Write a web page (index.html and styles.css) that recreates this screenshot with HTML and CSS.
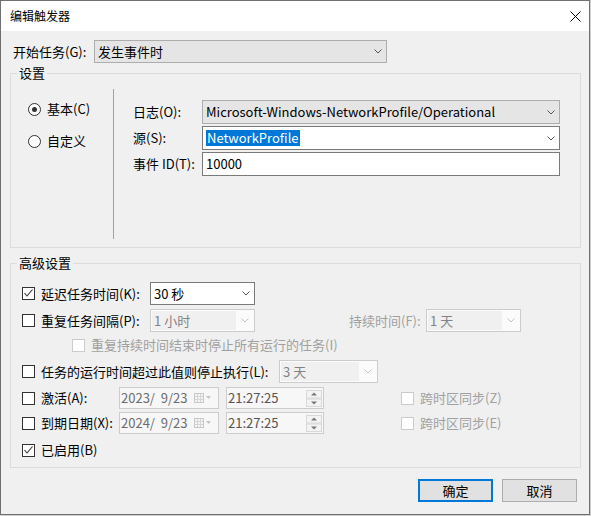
FILE: index.html
```html
<!DOCTYPE html>
<html lang="zh-CN">
<head>
<meta charset="utf-8">
<title>编辑触发器</title>
<link rel="stylesheet" href="styles.css">
</head>
<body>
<div class="window">
  <div class="titlebar">
    <span class="title">编辑触发器</span>
    <svg class="close" width="11" height="11" viewBox="0 0 11 11"><path d="M0.5 0.5 L10.5 10.5 M10.5 0.5 L0.5 10.5" stroke="#000" stroke-width="1" fill="none"/></svg>
  </div>
  <div class="content">
    <div class="start-row">
      <span class="start-label">开始任务(G):</span>
      <div class="combo gray start-combo"><span class="ctext">发生事件时</span><svg class="chev" width="8" height="5" viewBox="0 0 8 5"><path d="M0.5 0.5 L4 4 L7.5 0.5" stroke="#555" fill="none"/></svg></div>
    </div>

    <fieldset class="group g1">
      <legend>设置</legend>
      <div class="g1-inner">
        <div class="radios">
          <div class="radio-row"><span class="radio on"><span class="dot"></span></span><span>基本(C)</span></div>
          <div class="radio-row second"><span class="radio"></span><span>自定义</span></div>
        </div>
        <div class="vsep"></div>
        <div class="fields">
          <span class="flabel">日志(O):</span>
          <div class="combo gray"><span class="ctext">Microsoft-Windows-NetworkProfile/Operational</span><svg class="chev" width="8" height="5" viewBox="0 0 8 5"><path d="M0.5 0.5 L4 4 L7.5 0.5" stroke="#555" fill="none"/></svg></div>
          <span class="flabel">源(S):</span>
          <div class="combo edit"><span class="ctext"><span class="sel">NetworkProfile</span></span><svg class="chev" width="8" height="5" viewBox="0 0 8 5"><path d="M0.5 0.5 L4 4 L7.5 0.5" stroke="#555" fill="none"/></svg></div>
          <span class="flabel">事件 ID(T):</span>
          <div class="combo edit"><span class="ctext">10000</span></div>
        </div>
      </div>
    </fieldset>

    <fieldset class="group g2">
      <legend>高级设置</legend>
      <div class="g2-inner">
        <div class="arow row-a">
          <span class="cb"><svg width="11" height="11" viewBox="0 0 11 11"><path d="M1.5 5 L4 8 L9.5 1.5" stroke="#333" stroke-width="1.1" fill="none"/></svg></span>
          <span class="alabel w-a">延迟任务时间(K):</span>
          <div class="combo list w-sel"><span class="ctext">30 秒</span><svg class="chev" width="8" height="5" viewBox="0 0 8 5"><path d="M0.5 0.5 L4 4 L7.5 0.5" stroke="#555" fill="none"/></svg></div>
        </div>
        <div class="arow row-b">
          <span class="cb"></span>
          <span class="alabel w-a">重复任务间隔(P):</span>
          <div class="combo dis w-sel"><span class="ctext">1 小时</span><svg class="chev" width="8" height="5" viewBox="0 0 8 5"><path d="M0.5 0.5 L4 4 L7.5 0.5" stroke="#c4c4c4" fill="none"/></svg></div>
          <span class="alabel grey w-dur">持续时间(F):</span>
          <div class="combo dis w-day"><span class="ctext">1 天</span><svg class="chev" width="8" height="5" viewBox="0 0 8 5"><path d="M0.5 0.5 L4 4 L7.5 0.5" stroke="#c4c4c4" fill="none"/></svg></div>
        </div>
        <div class="arow row-c">
          <span class="cb dis"></span>
          <span class="alabel grey">重复持续时间结束时停止所有运行的任务(I)</span>
        </div>
        <div class="arow row-d">
          <span class="cb"></span>
          <span class="alabel w-d">任务的运行时间超过此值则停止执行(L):</span>
          <div class="combo dis w-3d"><span class="ctext">3 天</span><svg class="chev" width="8" height="5" viewBox="0 0 8 5"><path d="M0.5 0.5 L4 4 L7.5 0.5" stroke="#c4c4c4" fill="none"/></svg></div>
        </div>
        <div class="arow row-e">
          <span class="cb"></span>
          <span class="alabel w-e">激活(A):</span>
          <div class="datebox"><span class="dtext">2023/  9/23</span><svg class="cal" width="18" height="10" viewBox="0 0 18 10"><rect x="0.5" y="0.5" width="9" height="9" fill="#f4f4f4" stroke="#c8c8c8"/><path d="M1 3.5 H9 M1 6.5 H9 M3.5 1 V9 M6.5 1 V9" stroke="#d6d6d6"/><path d="M12 3 H17 L14.5 6 Z" fill="#c4c4c4"/></svg></div>
          <div class="timebox"><span class="ttext">21:27:25</span><svg class="spin" width="16" height="17" viewBox="0 0 16 17"><rect x="0.5" y="0.5" width="15" height="7.5" fill="#f3f3f3" stroke="#d8d8d8"/><rect x="0.5" y="9" width="15" height="7.5" fill="#f3f3f3" stroke="#d8d8d8"/><path d="M5 5.5 H11 L8 2.5 Z" fill="#777"/><path d="M5 11.5 H11 L8 14.5 Z" fill="#777"/></svg></div>
          <span class="cb dis tz"></span>
          <span class="alabel grey">跨时区同步(Z)</span>
        </div>
        <div class="arow row-f">
          <span class="cb"></span>
          <span class="alabel w-e">到期日期(X):</span>
          <div class="datebox"><span class="dtext">2024/  9/23</span><svg class="cal" width="18" height="10" viewBox="0 0 18 10"><rect x="0.5" y="0.5" width="9" height="9" fill="#f4f4f4" stroke="#c8c8c8"/><path d="M1 3.5 H9 M1 6.5 H9 M3.5 1 V9 M6.5 1 V9" stroke="#d6d6d6"/><path d="M12 3 H17 L14.5 6 Z" fill="#c4c4c4"/></svg></div>
          <div class="timebox"><span class="ttext">21:27:25</span><svg class="spin" width="16" height="17" viewBox="0 0 16 17"><rect x="0.5" y="0.5" width="15" height="7.5" fill="#f3f3f3" stroke="#d8d8d8"/><rect x="0.5" y="9" width="15" height="7.5" fill="#f3f3f3" stroke="#d8d8d8"/><path d="M5 5.5 H11 L8 2.5 Z" fill="#777"/><path d="M5 11.5 H11 L8 14.5 Z" fill="#777"/></svg></div>
          <span class="cb dis tz"></span>
          <span class="alabel grey">跨时区同步(E)</span>
        </div>
        <div class="arow row-g">
          <span class="cb"><svg width="11" height="11" viewBox="0 0 11 11"><path d="M1.5 5 L4 8 L9.5 1.5" stroke="#333" stroke-width="1.1" fill="none"/></svg></span>
          <span class="alabel">已启用(B)</span>
        </div>
      </div>
    </fieldset>

    <div class="buttons">
      <button class="btn default">确定</button>
      <button class="btn">取消</button>
    </div>
  </div>
</div>
</body>
</html>
```
FILE: styles.css
```css
* { box-sizing: border-box; }
html, body { margin: 0; padding: 0; }
body {
  width: 591px;
  height: 516px;
  overflow: hidden;
  background: #cfcfcf;
  font-family: "Noto Sans CJK SC", "Noto Sans", sans-serif;
  font-size: 13px;
  line-height: 16px;
  color: #000;
}
.window {
  width: 590px;
  height: 515px;
  border: 1px solid #707070;
  background: #f0f0f0;
  display: flex;
  flex-direction: column;
}
.titlebar {
  height: 30px;
  flex: none;
  background: #fff;
  display: flex;
  align-items: center;
  justify-content: space-between;
  padding: 0 8px 0 9px;
}
.title { font-size: 12px; }
.close { display: block; }
.content {
  flex: 1;
  padding: 9px 8px 0 9px;
  display: flex;
  flex-direction: column;
}
.start-row {
  height: 23px;
  display: flex;
  align-items: center;
  padding-left: 3px;
}
.start-label { width: 81px; white-space: nowrap; }
.start-combo { width: 293px; }

.combo {
  height: 100%;
  display: flex;
  align-items: center;
  border: 1px solid #adadad;
  padding-left: 3px;
  white-space: nowrap;
}
.combo .ctext { flex: 1; min-width: 0; }
.combo .chev { flex: none; margin-right: 4px; margin-left: 4px; }
.combo.gray { background: #e5e5e5; }
.combo.edit { background: #fff; border-color: #7a7a7a; }
.combo.list { background: #fff; border-color: #7a7a7a; }
.combo.dis {
  background: #fbfbfb;
  border-color: #cccccc;
  color: #838383;
  padding: 1px 0 1px 1px;
}
.combo.dis .ctext {
  align-self: stretch;
  background: #f0f0f0;
  padding-left: 2px;
  display: flex;
  align-items: center;
}
.combo.dis .chev { margin-left: 5px; margin-right: 5px; }
.sel {
  background: #0078d7;
  color: #fff;
  padding: 0 1px 0 1px;
  display: inline-block;
  line-height: 16px;
}

fieldset.group {
  margin: 2px 0 0 0;
  padding: 0;
  border: 1px solid #dcdcdc;
  min-width: 0;
}
fieldset.group legend {
  margin-left: 6px;
  padding: 0 2px;
  line-height: 16px;
}
.g1-inner {
  display: flex;
  padding: 8px 0 8px 0;
}
.radios {
  width: 102px;
  padding: 12px 0 0 17px;
}
.radio-row {
  height: 16px;
  display: flex;
  align-items: center;
  gap: 6px;
}
.radio-row.second { margin-top: 16px; }
.radio {
  width: 13px;
  height: 13px;
  border: 1px solid #333;
  border-radius: 50%;
  background: #fff;
  display: flex;
  align-items: center;
  justify-content: center;
}
.radio .dot {
  width: 5px;
  height: 5px;
  border-radius: 50%;
  background: #333;
}
.vsep {
  width: 1px;
  height: 150px;
  background: #a0a0a0;
}
.fields {
  padding: 11px 0 0 19px;
  display: grid;
  grid-template-columns: 69px 358px;
  grid-auto-rows: 24px;
  row-gap: 2px;
  align-items: center;
  align-content: start;
}
.flabel { white-space: nowrap; }
.fields .combo { height: 24px; padding-left: 3px; }

fieldset.g2 { margin-top: 7px; }
.g2-inner {
  padding: 11px 0 6px 11px;
  display: flex;
  flex-direction: column;
}
.arow {
  display: flex;
  align-items: center;
}
.row-a { height: 23px; }
.row-b { height: 23px; margin-top: 4px; }
.row-c { height: 22px; margin-top: 2px; padding-left: 50px; }
.row-d { height: 23px; margin-top: 4px; }
.row-e { height: 22px; margin-top: 4px; }
.row-f { height: 22px; margin-top: 3px; }
.row-g { height: 22px; margin-top: 5px; }

.cb {
  flex: none;
  width: 13px;
  height: 13px;
  border: 1px solid #333;
  background: #fff;
  margin-right: 6px;
  display: flex;
  align-items: center;
  justify-content: center;
}
.cb svg { display: block; }
.cb.dis { border-color: #cccccc; }
.cb.tz { margin-left: 77px; }
.alabel { white-space: nowrap; flex: none; }
.alabel.grey { color: #a0a0a0; }
.w-a { width: 109px; }
.w-d { width: 238px; }
.w-e { width: 78px; }
.w-dur { width: 77px; margin-left: 94px; }
.w-sel { width: 105px; }
.w-day { width: 95px; height: 23px; }
.w-3d { width: 99px; }

.datebox {
  width: 100px;
  height: 22px;
  border: 1px solid #cccccc;
  background: #f7f7f7;
  display: flex;
  align-items: center;
  padding-left: 1px;
  color: #6d6d6d;
}
.dtext { white-space: pre; flex: 1; }
.cal { margin-right: 6px; display: block; }
.timebox {
  width: 98px;
  height: 22px;
  margin-left: 7px;
  border: 1px solid #cccccc;
  background: #f7f7f7;
  display: flex;
  align-items: center;
  padding-left: 1px;
  color: #555;
}
.ttext { flex: 1; }
.spin { display: block; margin-right: 1px; }

.buttons {
  margin-top: 11px;
  margin-right: 4px;
  display: flex;
  justify-content: flex-end;
  gap: 9px;
}
.btn {
  width: 75px;
  height: 23px;
  font-family: inherit;
  font-size: 13px;
  line-height: 16px;
  color: #000;
  background: #e1e1e1;
  border: 1px solid #adadad;
  padding: 0;
  margin: 0;
}
.btn.default { border: 2px solid #0078d7; }
```
